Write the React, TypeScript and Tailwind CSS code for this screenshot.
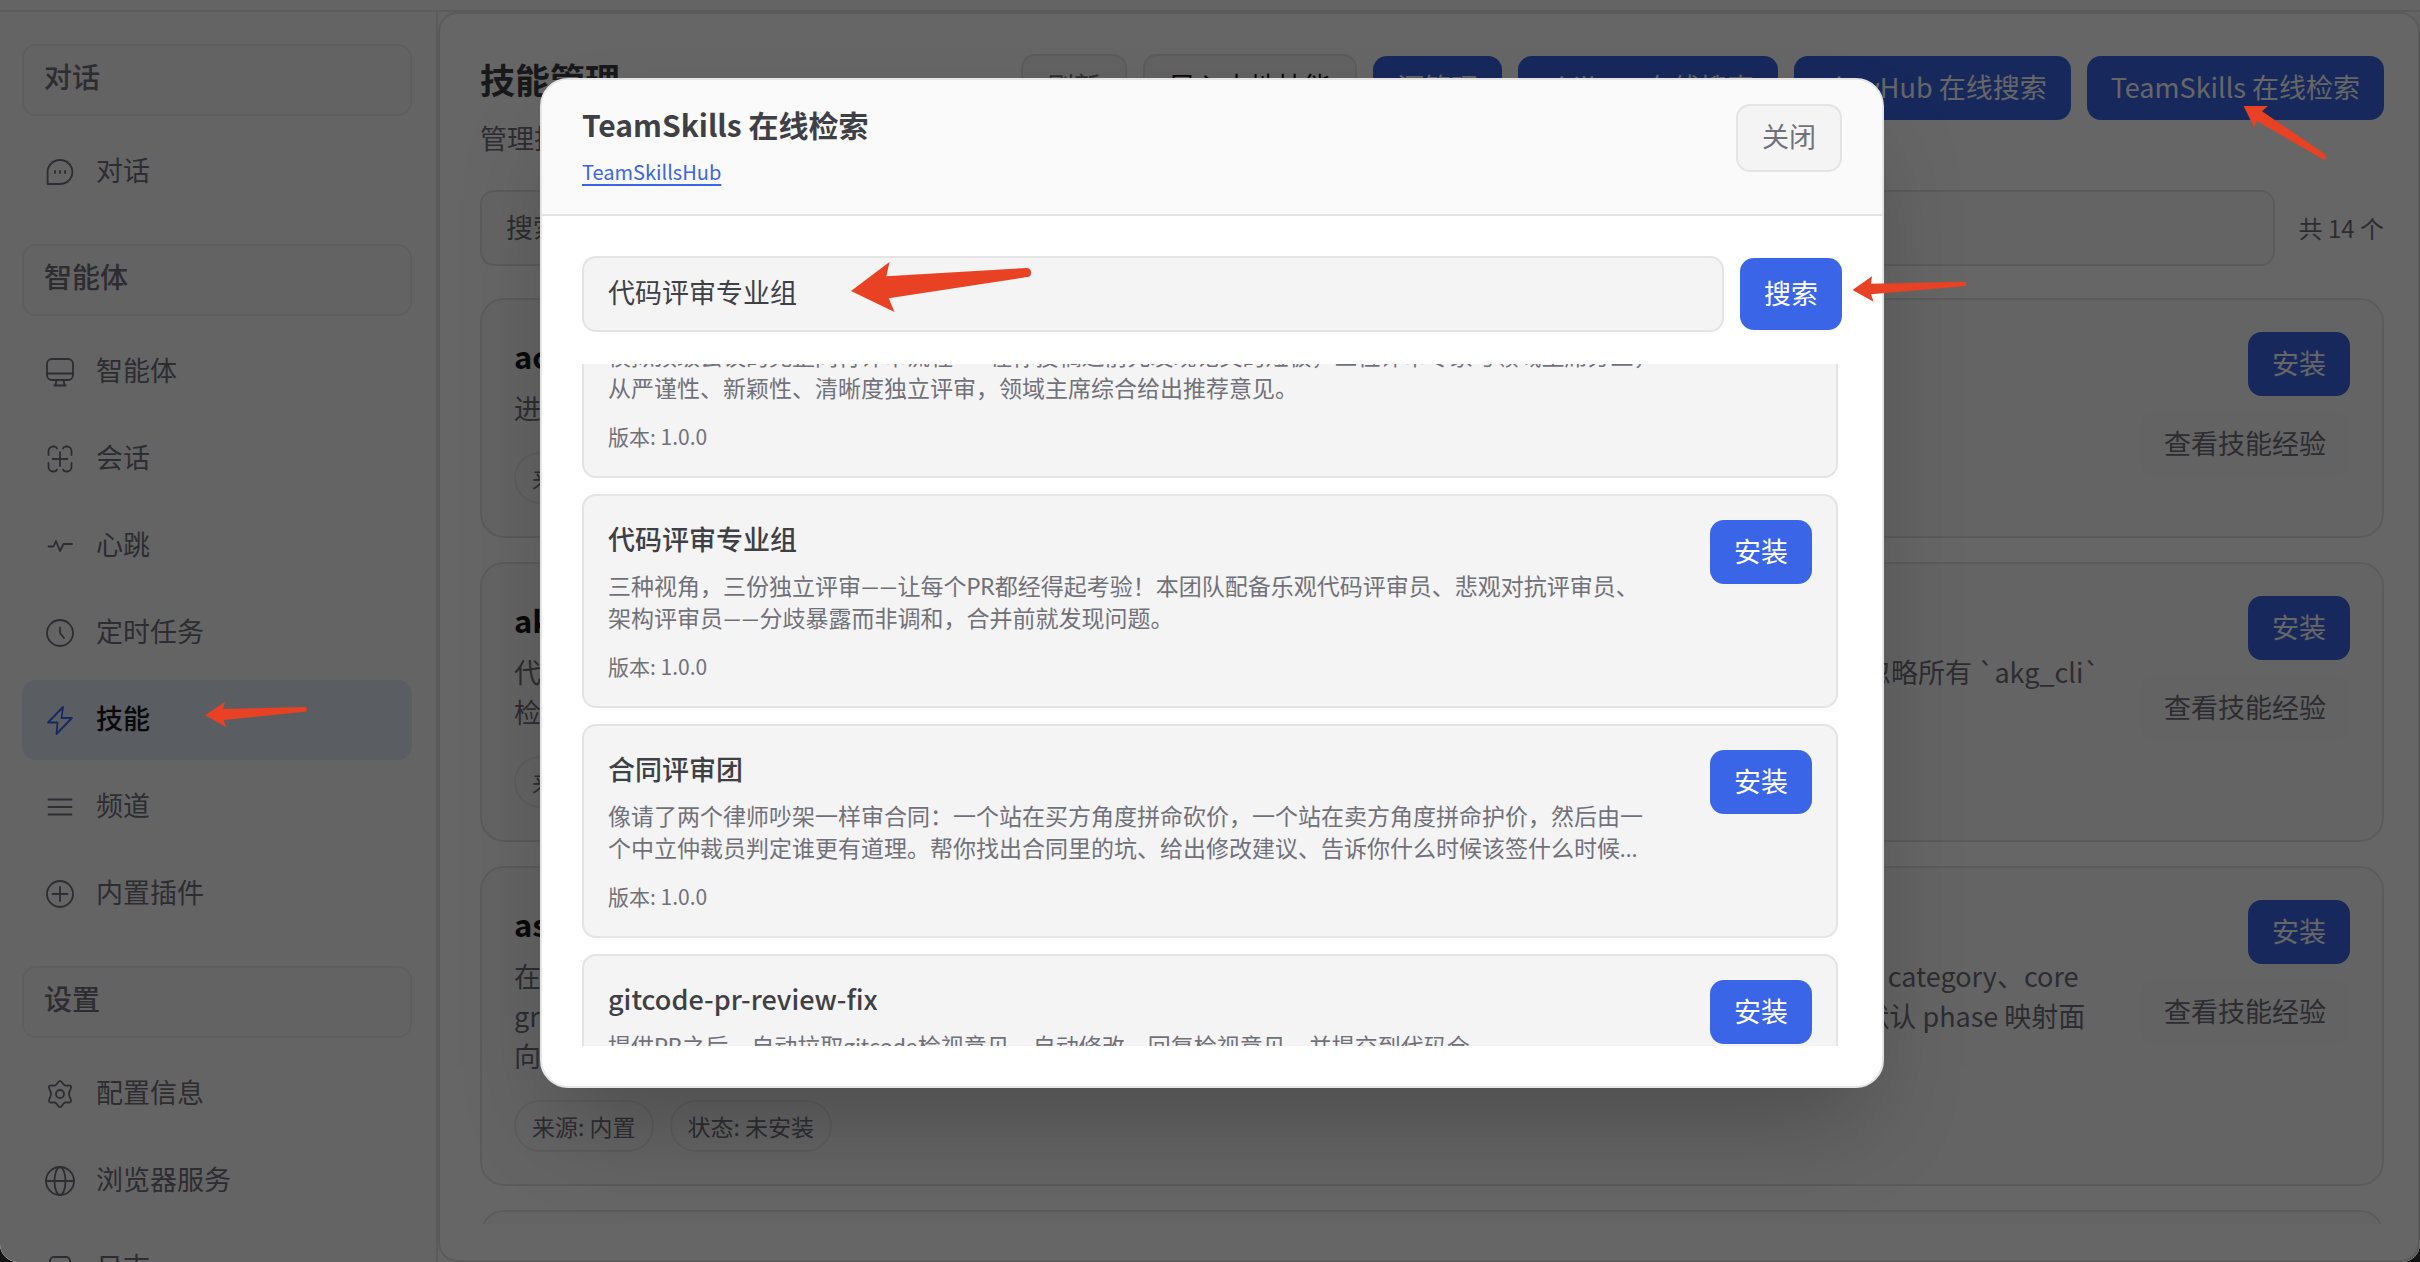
import React, { useEffect, useRef, useState } from 'react';

interface NavItem {
  label: string;
  icon: React.ReactNode;
  active?: boolean;
}

interface NavGroup {
  title: string;
  items: NavItem[];
}

interface LocalSkill {
  name: string;
  lines: string[];
}

interface OnlineSkill {
  name: string;
  desc: string;
  version: string;
}

const Icon: React.FC<{ children: React.ReactNode }> = ({ children }) => (
  <svg width="28" height="28" viewBox="0 0 28 28" fill="none" stroke="currentColor" strokeWidth="1.8" strokeLinecap="round" strokeLinejoin="round" className="shrink-0 overflow-visible" aria-hidden="true">
    {children}
  </svg>
);

const NAV_GROUPS: NavGroup[] = [
  {
    title: '对话',
    items: [
      {
        label: '对话',
        icon: (
          <Icon>
            <path d="M1.6 26V14A12.4 12 0 1 1 14 26Z" />
            <path d="M9 13v2M14 13v2M19 13v2" />
          </Icon>
        ),
      },
    ],
  },
  {
    title: '智能体',
    items: [
      {
        label: '智能体',
        icon: (
          <Icon>
            <rect x="1" y="1" width="26" height="21" rx="5" />
            <path d="M1 15.5h26M10.5 22l-1 5M17.5 22l1 5M8.5 27.5h11" />
          </Icon>
        ),
      },
      {
        label: '会话',
        icon: (
          <Icon>
            <path d="M2.5 10V6A4.500 4.500 0 0 1 7 1.500h1a3 3 0 0 1 3 2M17 3.500a3 3 0 0 1 3-2h1A4.500 4.500 0 0 1 25.500 6v4M25.500 18v4a4.500 4.500 0 0 1-4.500 4.500h-1a3 3 0 0 1-3-2M11 24.500a3 3 0 0 1-3 2H7A4.500 4.500 0 0 1 2.500 22v-4" />
            <path d="M14 7v14M6.500 14h15" />
          </Icon>
        ),
      },
      {
        label: '心跳',
        icon: (
          <Icon>
            <path d="M2.5 14.5h5L10 9l4 10 3.500-7H26" />
          </Icon>
        ),
      },
      {
        label: '定时任务',
        icon: (
          <Icon>
            <circle cx="14" cy="14" r="13" />
            <path d="M14 8.5V14l4 5" />
          </Icon>
        ),
      },
      {
        label: '技能',
        active: true,
        icon: (
          <Icon>
            <path d="M17 1 2 16.5h9.500L10.500 28 26 12h-10.500Z" />
          </Icon>
        ),
      },
      {
        label: '频道',
        icon: (
          <Icon>
            <path d="M2.5 6.5h23M2.5 14h23M2.5 21.5h23" />
          </Icon>
        ),
      },
      {
        label: '内置插件',
        icon: (
          <Icon>
            <circle cx="14" cy="14" r="13" />
            <path d="M14 7v14M6.5 14h15" />
          </Icon>
        ),
      },
    ],
  },
  {
    title: '设置',
    items: [
      {
        label: '配置信息',
        icon: (
          <Icon>
            <path d="M14 .8c2 0 2.6 3.6 4.8 4.6 2.2.9 5-1 6.2.8 1.1 2-2 4-2 7.800s3.100 5.800 2 7.800c-1.200 1.800-4-.1-6.200.8-2.200 1-2.800 4.600-4.800 4.600s-2.600-3.600-4.800-4.600c-2.200-.9-5 1-6.200-.8-1.100-2 2-4 2-7.800s-3.100-5.800-2-7.800c1.200-1.800 4 .1 6.200-.8C11.400 4.400 12 .8 14 .8Z" />
            <circle cx="14" cy="14" r="4" />
          </Icon>
        ),
      },
      {
        label: '浏览器服务',
        icon: (
          <Icon>
            <circle cx="14" cy="14" r="14" />
            <ellipse cx="14" cy="14" rx="5.5" ry="14" />
            <path d="M0 14h28" />
          </Icon>
        ),
      },
      {
        label: '日志',
        icon: (
          <Icon>
            <rect x="4" y="3" width="20" height="24" rx="4" />
            <path d="M9 11h10M9 17h10" />
          </Icon>
        ),
      },
    ],
  },
];

const LOCAL_SKILLS: LocalSkill[] = [
  {
    name: 'academic-research',
    lines: ['进行学术资料检索与整理'],
  },
  {
    name: 'akg-agents-cli',
    lines: [
      '代码生成与算子优化的命令行工具，支持在多种后端上完成算子的生成、验证与性能调优，当用户没有明确需求则忽略所有 `akg_cli`',
      '检索命令与相关说明',
    ],
  },
  {
    name: 'ascend-profiler',
    lines: [
      '在性能分析数据中定位瓶颈，按照算子类别与执行阶段汇总耗时情况，并输出结构化的分析结果，字段包含 name、category、core',
      'graph 等信息，支持自定义阶段的划分规则，并可按照模型结构对算子进行归类统计，没有指定划分规则时将使用默认 phase 映射面',
      '向用户展示结果',
    ],
  },
  {
    name: 'browser',
    lines: ['浏览器自动化操作'],
  },
];

const ONLINE_SKILLS: OnlineSkill[] = [
  {
    name: '论文评审委员会',
    desc: '模拟顶级会议的完整同行评审流程——在你投稿之前先发现论文的短板，三位评审专家与领域主席分工，从严谨性、新颖性、清晰度独立评审，领域主席综合给出推荐意见。',
    version: '1.0.0',
  },
  {
    name: '代码评审专业组',
    desc: '三种视角，三份独立评审——让每个PR都经得起考验！本团队配备乐观代码评审员、悲观对抗评审员、架构评审员——分歧暴露而非调和，合并前就发现问题。',
    version: '1.0.0',
  },
  {
    name: '合同评审团',
    desc: '像请了两个律师吵架一样审合同：一个站在买方角度拼命砍价，一个站在卖方角度拼命护价，然后由一个中立仲裁员判定谁更有道理。帮你找出合同里的坑、给出修改建议、告诉你什么时候该签什么时候不该签，让每一份合同都放心。',
    version: '1.0.0',
  },
  {
    name: 'gitcode-pr-review-fix',
    desc: '提供PR之后，自动拉取gitcode检视意见，自动修改，回复检视意见，并提交到代码仓',
    version: '1.0.0',
  },
];

const Sidebar: React.FC = () => (
  <aside className="w-[438px] shrink-0 border-r-2 border-[#e4e4e7] bg-[#fafafa] pl-[22px] pr-6 pt-8 overflow-hidden">
    <nav className="flex flex-col gap-8">
      {NAV_GROUPS.map(group => (
        <div key={group.title} className="flex flex-col gap-4">
          <button type="button" className="h-[72px] px-5 pb-2 text-left text-[28px] font-medium text-[#71717a] bg-[#f7f7f7] border-2 border-[#ebebeb] rounded-[14px]">
            {group.title}
          </button>
          <div className="flex flex-col gap-[7px]">
            {group.items.map(item => (
              <a
                key={item.label}
                href="#"
                className={
                  item.active
                    ? 'h-20 px-6 flex items-center gap-[22px] rounded-[14px] text-[27px] font-medium text-[#18181b] bg-[#e1e8f5]'
                    : 'h-20 px-6 flex items-center gap-[22px] rounded-[14px] text-[27px] text-[#71717a]'
                }
              >
                <span className={item.active ? 'text-[#3a65e6]' : ''}>{item.icon}</span>
                <span className="pb-1">{item.label}</span>
              </a>
            ))}
          </div>
        </div>
      ))}
    </nav>
  </aside>
);

const PrimaryButton: React.FC<{ children: React.ReactNode; className?: string; onClick?: () => void }> = ({ children, className = 'h-16', onClick }) => (
  <button type="button" onClick={onClick} className={`${className} shrink-0 px-6 pb-0.5 rounded-[14px] bg-[#3a65e6] text-white text-[27px] whitespace-nowrap`}>
    {children}
  </button>
);

const SecondaryButton: React.FC<{ children: React.ReactNode; className?: string; onClick?: () => void }> = ({ children, className = 'text-[#71717a]', onClick }) => (
  <button type="button" onClick={onClick} className={`${className} h-[68px] shrink-0 px-6 pb-1 rounded-[14px] border-2 border-[#e4e4e4] bg-[#f4f4f4] text-[27px] whitespace-nowrap`}>
    {children}
  </button>
);

const SkillCard: React.FC<{ skill: LocalSkill }> = ({ skill }) => (
  <article className="flex shrink-0 justify-between gap-6 p-8 border-2 border-[#e4e4e4] rounded-[24px] bg-[#fbfbfb]">
    <div className="min-w-0">
      <h3 className="text-[31px] leading-[48px] font-bold text-[#18181b]">{skill.name}</h3>
      <p className="mt-2 text-[27px] leading-10 text-[#71717a]">
        {skill.lines.map(line => (
          <span key={line} className="block whitespace-nowrap">{line}</span>
        ))}
      </p>
      <div className="mt-6 flex gap-4 text-[23px] text-[#71717a]">
        <span className="h-[52px] px-4 flex items-center border-2 border-[#e9e9e9] rounded-full">来源: 内置</span>
        <span className="h-[52px] px-4 flex items-center border-2 border-[#e9e9e9] rounded-full">状态: 未安装</span>
      </div>
    </div>
    <div className="flex flex-col items-end gap-4">
      <PrimaryButton>安装</PrimaryButton>
      <button type="button" className="h-16 px-6 pb-0.5 rounded-[14px] bg-[#f7f7f7] text-[27px] text-[#71717a] whitespace-nowrap">查看技能经验</button>
    </div>
  </article>
);

const SkillsPage: React.FC<{ onOpen: () => void }> = ({ onOpen }) => (
  <main className="flex-1 min-w-0 flex flex-col pl-10 pr-[34px] pt-10 pb-9 bg-white border-2 border-[#e4e4e7] rounded-[20px] overflow-hidden">
    <header className="flex items-start justify-between">
      <div>
        <h1 className="text-[35px] leading-[50px] font-bold text-[#3f3f46]">技能管理</h1>
        <p className="mt-3.5 text-[27px] leading-10 text-[#71717a]">管理技能</p>
      </div>
      <div className="flex items-center gap-4">
        <SecondaryButton>刷新</SecondaryButton>
        <SecondaryButton className="text-[#18181b]">导入本地技能</SecondaryButton>
        <PrimaryButton>源管理</PrimaryButton>
        <PrimaryButton>SkillNet 在线搜索</PrimaryButton>
        <PrimaryButton>ClawHub 在线搜索</PrimaryButton>
        <PrimaryButton onClick={onOpen}>TeamSkills 在线检索</PrimaryButton>
      </div>
    </header>

    <div className="mt-8 flex items-center gap-6">
      <input
        type="search"
        aria-label="搜索技能"
        placeholder="搜索技能"
        className="h-[76px] flex-1 min-w-0 px-6 pb-1 border-2 border-[#e4e4e4] rounded-[14px] bg-[#fafafa] text-[27px] placeholder:text-[#71717a]"
      />
      <span className="text-2xl text-[#71717a]">共 14 个</span>
    </div>

    <div className="mt-8 flex-1 min-h-0 flex flex-col gap-6 overflow-hidden">
      {LOCAL_SKILLS.map(skill => (
        <SkillCard key={skill.name} skill={skill} />
      ))}
    </div>
  </main>
);

const TeamSkillsModal: React.FC<{ onClose: () => void }> = ({ onClose }) => {
  const [keyword, setKeyword] = useState('代码评审专业组');
  const listRef = useRef<HTMLDivElement>(null);

  useEffect(() => {
    if (listRef.current) listRef.current.scrollTop = 100;
  }, []);

  return (
    <div className="absolute inset-0 flex items-start justify-center pt-[78px] pl-1 bg-black/60">
      <div role="dialog" aria-modal="true" aria-labelledby="team-title" className="w-[1344px] bg-white border-2 border-[#e4e4e4] rounded-[28px] overflow-hidden shadow-[0_50px_100px_-24px_rgba(0,0,0,0.25)]">

        {/* Header */}
        <div className="h-[136px] px-10 pt-6 flex items-start justify-between bg-[#fafafa] border-b-2 border-[#e4e4e4]">
          <div className="flex flex-col items-start gap-3.5">
            <h2 id="team-title" className="text-[30px] leading-[40px] font-bold text-[#3f3f46]">TeamSkills 在线检索</h2>
            <a href="#" className="text-[20px] leading-7 text-[#3a65e6] underline decoration-2 underline-offset-4">TeamSkillsHub</a>
          </div>
          <SecondaryButton onClick={onClose}>关闭</SecondaryButton>
        </div>

        {/* Body */}
        <div className="p-10">
          <form className="flex items-center gap-4" onSubmit={e => e.preventDefault()}>
            <input
              aria-label="技能关键词"
              value={keyword}
              onChange={e => setKeyword(e.target.value)}
              className="h-[76px] flex-1 min-w-0 px-6 pb-1.5 border-2 border-[#e4e4e4] rounded-[14px] bg-[#f4f4f4] text-[27px] text-[#3f3f46]"
            />
            <PrimaryButton className="h-[72px]">搜索</PrimaryButton>
          </form>

          <div ref={listRef} className="mt-8 h-[682px] pr-1 flex flex-col gap-4 overflow-y-auto [scrollbar-width:none]">
            {ONLINE_SKILLS.map(skill => (
              <article key={skill.name} className="flex shrink-0 items-start justify-between p-6 border-2 border-[#e4e4e4] rounded-[14px] bg-[#f4f4f4]">
                <div className="w-[1050px]">
                  <h3 className="text-[27px] leading-[38px] font-medium text-[#3f3f46]">{skill.name}</h3>
                  <p className="mt-3 text-[23px] leading-8 text-[#71717a] line-clamp-2 font-['Lato','Noto_Sans_CJK_SC',sans-serif]">{skill.desc}</p>
                  <div className="mt-4 text-[21px] leading-8 text-[#71717a]">版本: {skill.version}</div>
                </div>
                <PrimaryButton>安装</PrimaryButton>
              </article>
            ))}
          </div>
        </div>
      </div>
    </div>
  );
};

// Red pointers for the walkthrough steps
const GuideArrows: React.FC = () => (
  <svg width="2420" height="1262" viewBox="0 0 2420 1262" fill="#e84124" className="absolute left-0 top-0 pointer-events-none" aria-hidden="true">
    <path d="M205 715.3 225 702 223 709 304.600 707Q307 707 307 709.200T304.600 711.700L223.600 720 226.400 727.300Z" />
    <path d="M851 291 889.5 262 886.400 276.300 1026 268Q1031 268 1031 272.500T1027 277L888.700 298.300 894.500 312Z" />
    <path d="M1852.5 290 1872 276.300 1871 283.700 1964 281.700Q1966.300 281.700 1966.300 284T1964 286.300L1871 294.300 1873.600 301.700Z" />
    <path d="M2243.6 106H2267.800L2262 111.300 2324.400 153.700Q2327 156 2326 158.200T2322.500 159L2256.700 121 2254.400 127.700Z" />
  </svg>
);

const App: React.FC = () => {
  const [modalOpen, setModalOpen] = useState(true);

  return (
    <div className="h-screen bg-[#141414] font-['Noto_Sans_CJK_SC',sans-serif]">
      <div className="relative h-full flex flex-col bg-[#fafafa] rounded-b-[18px] overflow-hidden">
        <div className="h-3 shrink-0 border-b-2 border-[#e4e4e7]"></div>
        <div className="flex-1 min-h-0 flex">
          <Sidebar />
          <SkillsPage onOpen={() => setModalOpen(true)} />
        </div>
        {modalOpen && <TeamSkillsModal onClose={() => setModalOpen(false)} />}
        <GuideArrows />
      </div>
    </div>
  );
};

export default App;
